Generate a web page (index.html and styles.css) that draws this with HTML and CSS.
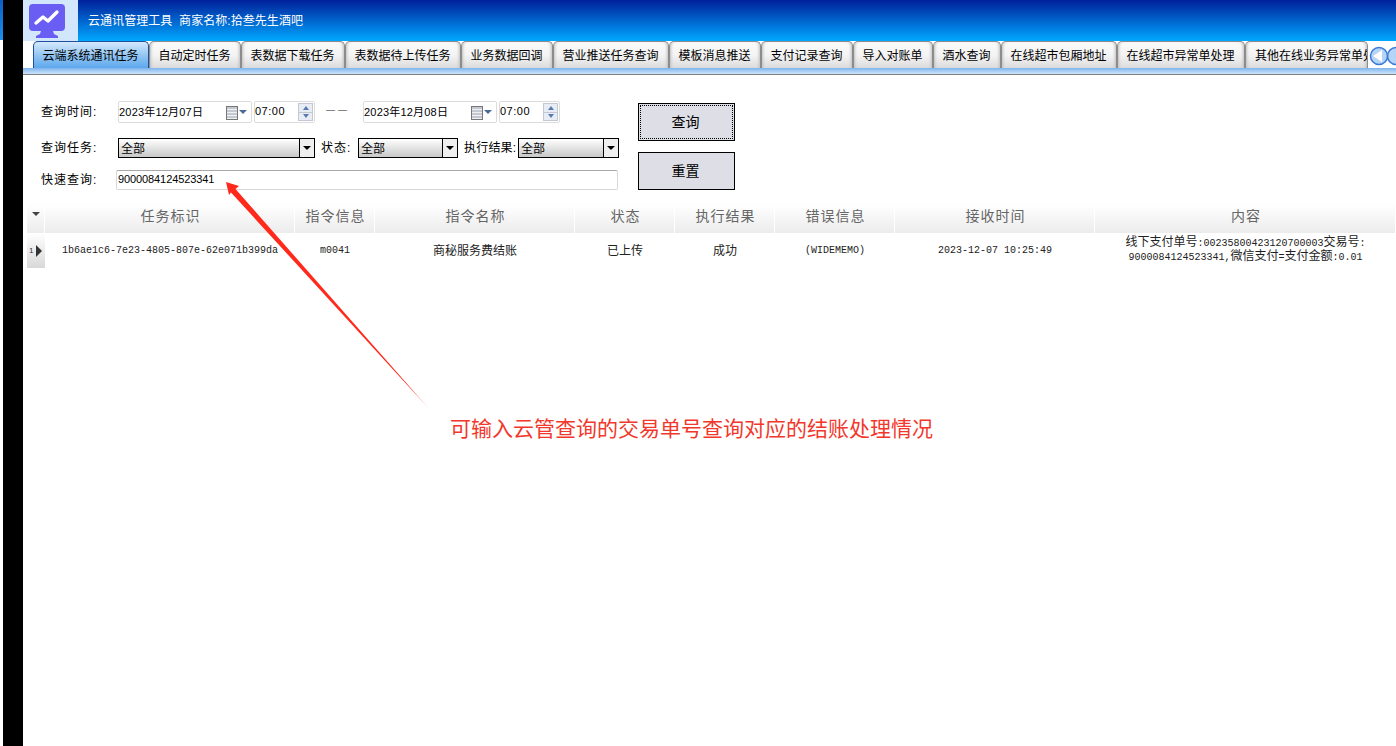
FILE: index.html
```html
<!DOCTYPE html>
<html lang="zh-CN">
<head>
  <meta charset="UTF-8" />
  <title>云通讯管理工具</title>
  <link rel="stylesheet" href="styles.css">
</head>
<body>
  <div class="side-strip"></div>
  <div class="side-black"></div>
  <div class="app">
    <div class="titlebar">
      <div class="logo">
        <svg width="38" height="34" viewBox="0 0 38 34">
          <rect x="1" y="0" width="36" height="27" rx="4" fill="#6a5df4"/>
          <path d="M13 27h12l1 3 4 2v2H8v-2l4-2z" fill="#6a5df4"/>
          <path d="M8 19l7-6 5 4 9-9" fill="none" stroke="#fff" stroke-width="3.4" stroke-linejoin="round" stroke-linecap="round"/>
        </svg>
      </div>
      <div class="title">云通讯管理工具&nbsp;&nbsp;商家名称:拾叁先生酒吧</div>
    </div>

    <div class="tabbar">
      <div class="tab active t116">云端系统通讯任务</div>
      <div class="tab t92">自动定时任务</div>
      <div class="tab t104">表数据下载任务</div>
      <div class="tab t116">表数据待上传任务</div>
      <div class="tab t92">业务数据回调</div>
      <div class="tab t116">营业推送任务查询</div>
      <div class="tab t92">模板消息推送</div>
      <div class="tab t92">支付记录查询</div>
      <div class="tab t80">导入对账单</div>
      <div class="tab t68">酒水查询</div>
      <div class="tab t116">在线超市包厢地址</div>
      <div class="tab t128">在线超市异常单处理</div>
      <div class="tab t123 clipped">其他在线业务异常单处理</div>
      <div class="scroller">
        <svg width="28" height="20" viewBox="0 0 28 20">
          <circle cx="27" cy="10" r="8.5" fill="#b4d4f8" stroke="#3a78d8" stroke-width="1.5"/>
          <circle cx="10" cy="10" r="8.5" fill="#b4d4f8" stroke="#3a78d8" stroke-width="1.5"/>
          <path d="M4 10l9-6v12z" fill="#fff"/>
        </svg>
      </div>
    </div>
    <div class="tabband"></div>

    <div class="query">
      <div class="fields">
        <div class="row row-date">
          <span class="label">查询时间:</span>
          <div class="date"><span class="val">2023年12月07日</span><span class="cal"></span><span class="cal-arrow"></span></div>
          <div class="time"><span class="val">07:00</span><span class="spin"><i class="up"></i><i class="down"></i></span></div>
          <span class="dash">——</span>
          <div class="date"><span class="val">2023年12月08日</span><span class="cal"></span><span class="cal-arrow"></span></div>
          <div class="time"><span class="val">07:00</span><span class="spin"><i class="up"></i><i class="down"></i></span></div>
        </div>
        <div class="row row-select">
          <span class="label">查询任务:</span>
          <div class="select w197">全部<span class="drop"></span></div>
          <span class="label-s">状态:</span>
          <div class="select w100">全部<span class="drop"></span></div>
          <span class="label-r">执行结果:</span>
          <div class="select w101">全部<span class="drop"></span></div>
        </div>
        <div class="row row-quick">
          <span class="label narrow">快速查询:</span>
          <div class="quick">9000084124523341</div>
        </div>
      </div>
      <div class="buttons">
        <button class="btn focus">查询</button>
        <button class="btn">重置</button>
      </div>
    </div>

    <div class="grid">
      <div class="grid-head">
        <div class="corner"></div>
        <div>任务标识</div>
        <div>指令信息</div>
        <div>指令名称</div>
        <div>状态</div>
        <div>执行结果</div>
        <div>错误信息</div>
        <div>接收时间</div>
        <div>内容</div>
      </div>
      <div class="grid-row">
        <div class="indicator"><span class="num">1</span><span class="pointer"></span></div>
        <div class="mono">1b6ae1c6-7e23-4805-807e-62e071b399da</div>
        <div class="mono">m0041</div>
        <div class="cjk">商秘服务费结账</div>
        <div class="cjk">已上传</div>
        <div class="cjk">成功</div>
        <div class="mono">(WIDEMEMO)</div>
        <div class="mono">2023-12-07 10:25:49</div>
        <div class="content">线下支付单号<span class="mono">:00235800423120700003</span>交易号<span class="mono">:</span><br><span class="mono">9000084124523341,</span>微信支付<span class="mono">=</span>支付金额<span class="mono">:0.01</span></div>
      </div>
    </div>
  </div>

  <!-- annotation drawn over the screenshot -->
  <svg class="arrow" width="1396" height="746" viewBox="0 0 1396 746">
    <defs>
      <linearGradient id="fade" gradientUnits="userSpaceOnUse" x1="226" y1="182" x2="430" y2="410">
        <stop offset="0" stop-color="#ff2a1c"/>
        <stop offset="0.9" stop-color="#ff2a1c"/>
        <stop offset="1" stop-color="#ffc4be"/>
      </linearGradient>
    </defs>
    <polygon points="226,182 239,186 235.5,189 431,411 231,192.5 229,195" fill="url(#fade)"/>
  </svg>
  <div class="note">可输入云管查询的交易单号查询对应的结账处理情况</div>
</body>
</html>
```

FILE: styles.css
```css
html, body {
  margin: 0;
  height: 746px;
  overflow: hidden;
}
body {
  display: flex;
  position: relative;
  background: #fff;
  font-family: "Liberation Sans", "Noto Sans CJK SC", sans-serif;
  font-size: 12px;
  color: #000;
}
.side-strip {
  width: 3px;
  background: linear-gradient(#0a5fc8 0, #1a90f0 40px, #fff 40px);
}
.side-black {
  width: 20px;
  background: #000;
}
.app {
  flex: 1;
  min-width: 0;
}

/* title bar */
.titlebar {
  display: flex;
  height: 41px;
  background: linear-gradient(#00209a, #00a8ff);
}
.logo {
  width: 55px;
  background: #d2e6fc;
  padding: 4px 0 0 5px;
  box-sizing: border-box;
}
.title {
  margin-left: 10px;
  line-height: 42px;
  letter-spacing: 0.05px;
  color: #fff;
}

/* tabs */
.tabbar {
  display: flex;
  height: 27px;
  padding-left: 10px;
}
.tab {
  box-sizing: border-box;
  border: 1px solid #8c8c8c;
  border-bottom: none;
  border-radius: 5px 5px 0 0;
  background: linear-gradient(#fafafa 0, #f4f4f4 50%, #dcdcdc 100%);
  box-shadow: inset 3px 0 3px -2px #bdbdbd, inset -3px 0 3px -2px #bdbdbd;
  padding-right: 1px;
  text-align: center;
  line-height: 28px;
  white-space: nowrap;
  overflow: hidden;
}
.tab.active {
  background: linear-gradient(#d6e9fc 0, #8fc3f2 55%, #5da8ee 100%);
  box-shadow: none;
  border-color: #1e4fa0;
}
.tab.clipped {
  padding: 0 0 0 9px;
  text-align: left;
}
.t68 { width: 68px; }
.t80 { width: 80px; }
.t92 { width: 92px; }
.t104 { width: 104px; }
.t116 { width: 116px; }
.t123 { width: 123px; }
.t128 { width: 128px; }
.scroller {
  flex: 1;
  padding-top: 5px;
  padding-left: 1px;
  overflow: hidden;
}
.tabband {
  height: 6px;
  background: linear-gradient(#7db4ee, #cfe4fa);
  border-bottom: 1px solid #808080;
}

/* query form */
.query {
  display: flex;
  padding: 26px 0 0 18px;
  height: 103px;
}
.fields {
  width: 597px;
}
.row {
  display: flex;
  align-items: center;
}
.row-date {
  height: 22px;
}
.row-select {
  height: 20px;
  margin-top: 15px;
}
.row-quick {
  height: 20px;
  margin-top: 12px;
}
.label, .label-s, .label-r {
  letter-spacing: 1px;
  padding-bottom: 3px;
  white-space: nowrap;
}
.label {
  width: 77px;
  flex: none;
}
.label.narrow {
  width: 75px;
}
.label-s {
  margin-left: 6px;
  width: 37px;
}
.label-r {
  margin-left: 6px;
  width: 54px;
  letter-spacing: 0.2px;
}
.date, .time {
  box-sizing: border-box;
  height: 22px;
  border: 1px solid #dcdcdc;
  border-radius: 2px;
  display: flex;
  align-items: center;
  padding-left: 0;
  position: relative;
  font-size: 11px;
}
.val {
  padding-bottom: 2px;
}
.date {
  width: 134px;
  letter-spacing: 0.2px;
}
.time {
  width: 61px;
  margin-left: 2px;
  letter-spacing: 0.5px;
}
.dash {
  width: 37px;
  margin-left: 11px;
  padding-bottom: 4px;
  color: #222;
  font-size: 9px;
  letter-spacing: 3px;
}
.cal {
  width: 10px;
  height: 12px;
  border: 1px solid #777;
  background: repeating-linear-gradient(#c4c8d0 0 2px, #eef0f4 2px 3px);
  position: absolute;
  left: 107px;
  top: 4px;
}
.cal-arrow {
  position: absolute;
  left: 120px;
  top: 8px;
  border: 4px solid transparent;
  border-top: 4px solid #4a6a9a;
  border-bottom: none;
}
.spin {
  position: absolute;
  right: 1px;
  top: 1px;
  width: 15px;
  height: 18px;
  display: flex;
  flex-direction: column;
  border: 1px solid #c4c8d4;
  box-sizing: border-box;
  background: #e8ecf4;
}
.spin i {
  flex: 1;
  display: flex;
  justify-content: center;
  align-items: center;
}
.spin i::before {
  content: "";
  border: 3px solid transparent;
}
.spin .up::before {
  border-bottom: 4px solid #5a7ab0;
  border-top: none;
}
.spin .down {
  border-top: 1px solid #c4c8d4;
}
.spin .down::before {
  border-top: 4px solid #5a7ab0;
  border-bottom: none;
}
.select {
  box-sizing: border-box;
  height: 20px;
  border: 1px solid #000;
  background: linear-gradient(#fff, #c8c8c8);
  padding-left: 2px;
  line-height: 20px;
  position: relative;
  flex: none;
}
.w197 { width: 197px; }
.w100 { width: 100px; }
.w101 { width: 101px; }
.drop {
  position: absolute;
  right: 0;
  top: 0;
  bottom: 0;
  width: 14px;
  background: #efefef;
  border-left: 1px solid #000;
}
.drop::after {
  content: "";
  position: absolute;
  left: 3px;
  top: 7px;
  border: 4px solid transparent;
  border-top: 4px solid #000;
  border-bottom: none;
}
.quick {
  box-sizing: border-box;
  width: 502px;
  height: 20px;
  border: 1px solid #d8d8d8;
  border-top-color: #a8a8a8;
  border-radius: 2px;
  padding-left: 1px;
  line-height: 16px;
  font-size: 11px;
  letter-spacing: -0.1px;
}
.buttons {
  display: flex;
  flex-direction: column;
  gap: 11px;
  margin-top: 2px;
}
.btn {
  box-sizing: border-box;
  width: 97px;
  height: 38px;
  background: #dedfe6;
  border: 1px solid #000;
  font: inherit;
  font-size: 14px;
  padding: 0 2px 2px 0;
}
.btn.focus {
  outline: 1px dotted #000;
  outline-offset: -3px;
}

/* data grid */
.grid {
  margin-left: 4px;
}
.grid-head, .grid-row {
  display: grid;
  grid-template-columns: 18px 250px 80px 200px 100px 100px 120px 200px 301px;
}
.grid-head {
  height: 29px;
}
.grid-head div {
  background: linear-gradient(#fff, #ececec);
  border-right: 1px solid #fff;
  color: #666;
  font-size: 14px;
  letter-spacing: 1px;
  line-height: 25px;
  padding-left: 2px;
  text-align: center;
}
.grid-head .corner {
  position: relative;
}
.corner::after {
  content: "";
  position: absolute;
  left: 5px;
  top: 8px;
  border: 4px solid transparent;
  border-top: 4px solid #444;
  border-bottom: none;
}
.grid-row {
  height: 35px;
  align-items: center;
  text-align: center;
  color: #222;
}
.mono {
  font-family: "Liberation Mono", "Noto Sans CJK SC", monospace;
  font-size: 10px;
}
.cjk {
  padding-bottom: 3px;
}
.indicator {
  height: 35px;
  background: linear-gradient(#fff, #d8d8d8);
  display: flex;
  align-items: center;
  padding-left: 2px;
  box-sizing: border-box;
}
.num {
  font-size: 8px;
  color: #333;
}
.pointer {
  margin-left: 3px;
  border-left: 6px solid #333;
  border-top: 6px solid transparent;
  border-bottom: 6px solid transparent;
}
.content {
  line-height: 13px;
  padding-bottom: 2px;
}

/* annotation */
.arrow {
  position: absolute;
  left: 0;
  top: 0;
  pointer-events: none;
}
.note {
  position: absolute;
  left: 450px;
  top: 414px;
  font-size: 21px;
  line-height: 30px;
  color: #f2382c;
  white-space: nowrap;
}
```
